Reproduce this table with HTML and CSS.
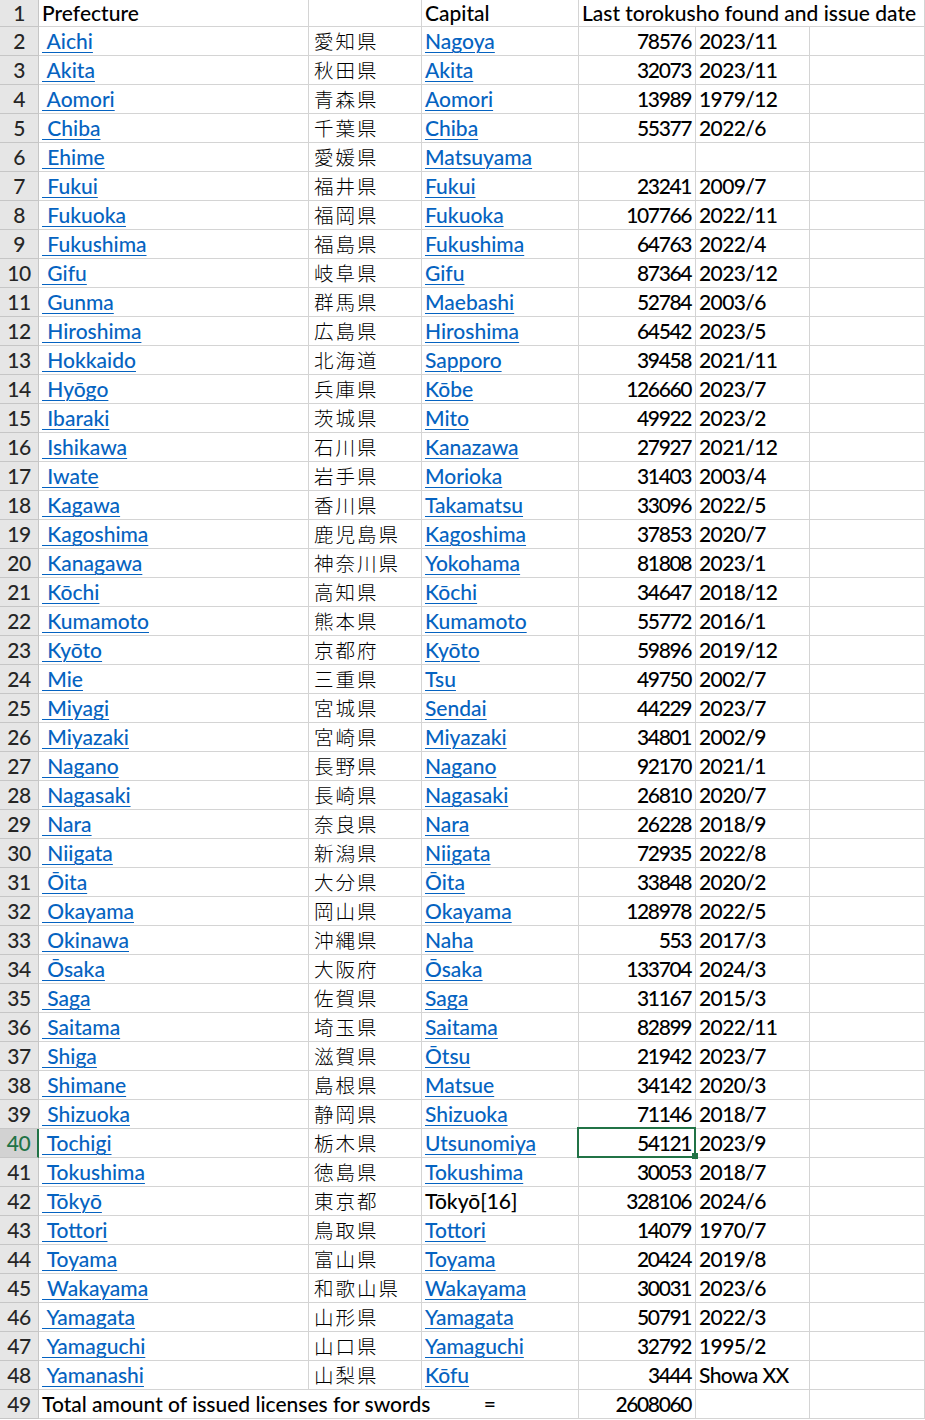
FILE: index.html
```html
<!DOCTYPE html>
<html lang="en">
<head>
<meta charset="utf-8">
<title>Prefectures</title>
<link rel="stylesheet" href="styles.css">
</head>
<body>
<div class="sheet">
  <div class="row row-first">
    <div class="c rh">1</div><div class="c">Prefecture</div><div class="c"></div><div class="c">Capital</div><div class="c span3">Last torokusho found and issue date</div>
  </div>
  <div class="row"><div class="c rh">2</div><div class="c"><a> Aichi</a></div><div class="c jp">愛知県</div><div class="c"><a>Nagoya</a></div><div class="c num">78576</div><div class="c date">2023/11</div><div class="c"></div></div>
  <div class="row"><div class="c rh">3</div><div class="c"><a> Akita</a></div><div class="c jp">秋田県</div><div class="c"><a>Akita</a></div><div class="c num">32073</div><div class="c date">2023/11</div><div class="c"></div></div>
  <div class="row"><div class="c rh">4</div><div class="c"><a> Aomori</a></div><div class="c jp">青森県</div><div class="c"><a>Aomori</a></div><div class="c num">13989</div><div class="c date">1979/12</div><div class="c"></div></div>
  <div class="row"><div class="c rh">5</div><div class="c"><a> Chiba</a></div><div class="c jp">千葉県</div><div class="c"><a>Chiba</a></div><div class="c num">55377</div><div class="c date">2022/6</div><div class="c"></div></div>
  <div class="row"><div class="c rh">6</div><div class="c"><a> Ehime</a></div><div class="c jp">愛媛県</div><div class="c"><a>Matsuyama</a></div><div class="c num"></div><div class="c date"></div><div class="c"></div></div>
  <div class="row"><div class="c rh">7</div><div class="c"><a> Fukui</a></div><div class="c jp">福井県</div><div class="c"><a>Fukui</a></div><div class="c num">23241</div><div class="c date">2009/7</div><div class="c"></div></div>
  <div class="row"><div class="c rh">8</div><div class="c"><a> Fukuoka</a></div><div class="c jp">福岡県</div><div class="c"><a>Fukuoka</a></div><div class="c num">107766</div><div class="c date">2022/11</div><div class="c"></div></div>
  <div class="row"><div class="c rh">9</div><div class="c"><a> Fukushima</a></div><div class="c jp">福島県</div><div class="c"><a>Fukushima</a></div><div class="c num">64763</div><div class="c date">2022/4</div><div class="c"></div></div>
  <div class="row"><div class="c rh">10</div><div class="c"><a> Gifu</a></div><div class="c jp">岐阜県</div><div class="c"><a>Gifu</a></div><div class="c num">87364</div><div class="c date">2023/12</div><div class="c"></div></div>
  <div class="row"><div class="c rh">11</div><div class="c"><a> Gunma</a></div><div class="c jp">群馬県</div><div class="c"><a>Maebashi</a></div><div class="c num">52784</div><div class="c date">2003/6</div><div class="c"></div></div>
  <div class="row"><div class="c rh">12</div><div class="c"><a> Hiroshima</a></div><div class="c jp">広島県</div><div class="c"><a>Hiroshima</a></div><div class="c num">64542</div><div class="c date">2023/5</div><div class="c"></div></div>
  <div class="row"><div class="c rh">13</div><div class="c"><a> Hokkaido</a></div><div class="c jp">北海道</div><div class="c"><a>Sapporo</a></div><div class="c num">39458</div><div class="c date">2021/11</div><div class="c"></div></div>
  <div class="row"><div class="c rh">14</div><div class="c"><a> Hyōgo</a></div><div class="c jp">兵庫県</div><div class="c"><a>Kōbe</a></div><div class="c num">126660</div><div class="c date">2023/7</div><div class="c"></div></div>
  <div class="row"><div class="c rh">15</div><div class="c"><a> Ibaraki</a></div><div class="c jp">茨城県</div><div class="c"><a>Mito</a></div><div class="c num">49922</div><div class="c date">2023/2</div><div class="c"></div></div>
  <div class="row"><div class="c rh">16</div><div class="c"><a> Ishikawa</a></div><div class="c jp">石川県</div><div class="c"><a>Kanazawa</a></div><div class="c num">27927</div><div class="c date">2021/12</div><div class="c"></div></div>
  <div class="row"><div class="c rh">17</div><div class="c"><a> Iwate</a></div><div class="c jp">岩手県</div><div class="c"><a>Morioka</a></div><div class="c num">31403</div><div class="c date">2003/4</div><div class="c"></div></div>
  <div class="row"><div class="c rh">18</div><div class="c"><a> Kagawa</a></div><div class="c jp">香川県</div><div class="c"><a>Takamatsu</a></div><div class="c num">33096</div><div class="c date">2022/5</div><div class="c"></div></div>
  <div class="row"><div class="c rh">19</div><div class="c"><a> Kagoshima</a></div><div class="c jp">鹿児島県</div><div class="c"><a>Kagoshima</a></div><div class="c num">37853</div><div class="c date">2020/7</div><div class="c"></div></div>
  <div class="row"><div class="c rh">20</div><div class="c"><a> Kanagawa</a></div><div class="c jp">神奈川県</div><div class="c"><a>Yokohama</a></div><div class="c num">81808</div><div class="c date">2023/1</div><div class="c"></div></div>
  <div class="row"><div class="c rh">21</div><div class="c"><a> Kōchi</a></div><div class="c jp">高知県</div><div class="c"><a>Kōchi</a></div><div class="c num">34647</div><div class="c date">2018/12</div><div class="c"></div></div>
  <div class="row"><div class="c rh">22</div><div class="c"><a> Kumamoto</a></div><div class="c jp">熊本県</div><div class="c"><a>Kumamoto</a></div><div class="c num">55772</div><div class="c date">2016/1</div><div class="c"></div></div>
  <div class="row"><div class="c rh">23</div><div class="c"><a> Kyōto</a></div><div class="c jp">京都府</div><div class="c"><a>Kyōto</a></div><div class="c num">59896</div><div class="c date">2019/12</div><div class="c"></div></div>
  <div class="row"><div class="c rh">24</div><div class="c"><a> Mie</a></div><div class="c jp">三重県</div><div class="c"><a>Tsu</a></div><div class="c num">49750</div><div class="c date">2002/7</div><div class="c"></div></div>
  <div class="row"><div class="c rh">25</div><div class="c"><a> Miyagi</a></div><div class="c jp">宮城県</div><div class="c"><a>Sendai</a></div><div class="c num">44229</div><div class="c date">2023/7</div><div class="c"></div></div>
  <div class="row"><div class="c rh">26</div><div class="c"><a> Miyazaki</a></div><div class="c jp">宮崎県</div><div class="c"><a>Miyazaki</a></div><div class="c num">34801</div><div class="c date">2002/9</div><div class="c"></div></div>
  <div class="row"><div class="c rh">27</div><div class="c"><a> Nagano</a></div><div class="c jp">長野県</div><div class="c"><a>Nagano</a></div><div class="c num">92170</div><div class="c date">2021/1</div><div class="c"></div></div>
  <div class="row"><div class="c rh">28</div><div class="c"><a> Nagasaki</a></div><div class="c jp">長崎県</div><div class="c"><a>Nagasaki</a></div><div class="c num">26810</div><div class="c date">2020/7</div><div class="c"></div></div>
  <div class="row"><div class="c rh">29</div><div class="c"><a> Nara</a></div><div class="c jp">奈良県</div><div class="c"><a>Nara</a></div><div class="c num">26228</div><div class="c date">2018/9</div><div class="c"></div></div>
  <div class="row"><div class="c rh">30</div><div class="c"><a> Niigata</a></div><div class="c jp">新潟県</div><div class="c"><a>Niigata</a></div><div class="c num">72935</div><div class="c date">2022/8</div><div class="c"></div></div>
  <div class="row"><div class="c rh">31</div><div class="c"><a> Ōita</a></div><div class="c jp">大分県</div><div class="c"><a>Ōita</a></div><div class="c num">33848</div><div class="c date">2020/2</div><div class="c"></div></div>
  <div class="row"><div class="c rh">32</div><div class="c"><a> Okayama</a></div><div class="c jp">岡山県</div><div class="c"><a>Okayama</a></div><div class="c num">128978</div><div class="c date">2022/5</div><div class="c"></div></div>
  <div class="row"><div class="c rh">33</div><div class="c"><a> Okinawa</a></div><div class="c jp">沖縄県</div><div class="c"><a>Naha</a></div><div class="c num">553</div><div class="c date">2017/3</div><div class="c"></div></div>
  <div class="row"><div class="c rh">34</div><div class="c"><a> Ōsaka</a></div><div class="c jp">大阪府</div><div class="c"><a>Ōsaka</a></div><div class="c num">133704</div><div class="c date">2024/3</div><div class="c"></div></div>
  <div class="row"><div class="c rh">35</div><div class="c"><a> Saga</a></div><div class="c jp">佐賀県</div><div class="c"><a>Saga</a></div><div class="c num">31167</div><div class="c date">2015/3</div><div class="c"></div></div>
  <div class="row"><div class="c rh">36</div><div class="c"><a> Saitama</a></div><div class="c jp">埼玉県</div><div class="c"><a>Saitama</a></div><div class="c num">82899</div><div class="c date">2022/11</div><div class="c"></div></div>
  <div class="row"><div class="c rh">37</div><div class="c"><a> Shiga</a></div><div class="c jp">滋賀県</div><div class="c"><a>Ōtsu</a></div><div class="c num">21942</div><div class="c date">2023/7</div><div class="c"></div></div>
  <div class="row"><div class="c rh">38</div><div class="c"><a> Shimane</a></div><div class="c jp">島根県</div><div class="c"><a>Matsue</a></div><div class="c num">34142</div><div class="c date">2020/3</div><div class="c"></div></div>
  <div class="row"><div class="c rh">39</div><div class="c"><a> Shizuoka</a></div><div class="c jp">静岡県</div><div class="c"><a>Shizuoka</a></div><div class="c num">71146</div><div class="c date">2018/7</div><div class="c"></div></div>
  <div class="row"><div class="c rh active">40</div><div class="c"><a> Tochigi</a></div><div class="c jp">栃木県</div><div class="c"><a>Utsunomiya</a></div><div class="c num selected">54121</div><div class="c date">2023/9</div><div class="c"></div></div>
  <div class="row"><div class="c rh">41</div><div class="c"><a> Tokushima</a></div><div class="c jp">徳島県</div><div class="c"><a>Tokushima</a></div><div class="c num">30053</div><div class="c date">2018/7</div><div class="c"></div></div>
  <div class="row"><div class="c rh">42</div><div class="c"><a> Tōkyō</a></div><div class="c jp">東京都</div><div class="c">Tōkyō[16]</div><div class="c num">328106</div><div class="c date">2024/6</div><div class="c"></div></div>
  <div class="row"><div class="c rh">43</div><div class="c"><a> Tottori</a></div><div class="c jp">鳥取県</div><div class="c"><a>Tottori</a></div><div class="c num">14079</div><div class="c date">1970/7</div><div class="c"></div></div>
  <div class="row"><div class="c rh">44</div><div class="c"><a> Toyama</a></div><div class="c jp">富山県</div><div class="c"><a>Toyama</a></div><div class="c num">20424</div><div class="c date">2019/8</div><div class="c"></div></div>
  <div class="row"><div class="c rh">45</div><div class="c"><a> Wakayama</a></div><div class="c jp">和歌山県</div><div class="c"><a>Wakayama</a></div><div class="c num">30031</div><div class="c date">2023/6</div><div class="c"></div></div>
  <div class="row"><div class="c rh">46</div><div class="c"><a> Yamagata</a></div><div class="c jp">山形県</div><div class="c"><a>Yamagata</a></div><div class="c num">50791</div><div class="c date">2022/3</div><div class="c"></div></div>
  <div class="row"><div class="c rh">47</div><div class="c"><a> Yamaguchi</a></div><div class="c jp">山口県</div><div class="c"><a>Yamaguchi</a></div><div class="c num">32792</div><div class="c date">1995/2</div><div class="c"></div></div>
  <div class="row"><div class="c rh">48</div><div class="c"><a> Yamanashi</a></div><div class="c jp">山梨県</div><div class="c"><a>Kōfu</a></div><div class="c num">3444</div><div class="c date">Showa XX</div><div class="c"></div></div>
  <div class="row"><div class="c rh">49</div><div class="c span3 total"><span>Total amount of issued licenses for swords</span><span class="eq">=</span></div><div class="c num">2608060</div><div class="c"></div><div class="c"></div></div>
</div>
</body>
</html>
```

FILE: styles.css
```css
html, body {
  margin: 0;
  padding: 0;
  background: #ffffff;
}

body {
  font-family: "Lato", "Noto Sans CJK JP", sans-serif;
  font-weight: 500;
  font-size: 21px;
  color: #000000;
  overflow: hidden;
}

.sheet {
  display: flex;
  flex-direction: column;
  width: 925px;
}

.row {
  display: grid;
  grid-template-columns: 39px 270px 113px 157px 117px 114px 115px;
  height: 29px;
}

.row-first {
  height: 27px;
}

.c {
  box-sizing: border-box;
  border-right: 1px solid #d4d4d4;
  border-bottom: 1px solid #d4d4d4;
  padding: 0 3px 1px 3px;
  line-height: 27px;
  white-space: pre;
  overflow: visible;
  min-width: 0;
}

.row-first .c {
  padding-bottom: 0;
  line-height: 26px;
}

.span3 {
  grid-column: span 3;
}

.rh {
  background: #e6e6e6;
  border-right-color: #c6c6c6;
  border-bottom-color: #c6c6c6;
  color: #262626;
  text-align: center;
  padding-left: 0;
  padding-right: 0;
  letter-spacing: -0.5px;
}

.rh.active {
  background: #d2d2d2;
  color: #217346;
  border-right: 2px solid #217346;
}

a {
  color: #0563c1;
  text-decoration: underline;
  text-decoration-thickness: 1px;
  text-underline-offset: 3px;
}

.jp {
  font-family: "Noto Sans CJK JP", sans-serif;
  font-weight: 300;
  font-size: 19.5px;
  letter-spacing: 2px;
  padding-left: 5px;
}

.num {
  text-align: right;
  letter-spacing: -1.4px;
  padding-right: 4px;
}

.date {
  letter-spacing: -0.6px;
}

.total {
  display: flex;
}

.total .eq {
  margin-left: auto;
  margin-right: 79px;
}

.selected {
  position: relative;
}

.selected::after {
  content: "";
  position: absolute;
  top: -2px;
  left: -2px;
  right: -1px;
  bottom: -1px;
  border: 2px solid #217346;
  pointer-events: none;
}

.selected::before {
  content: "";
  position: absolute;
  right: -3px;
  bottom: -2px;
  width: 6px;
  height: 6px;
  background: #217346;
  z-index: 1;
}
```
